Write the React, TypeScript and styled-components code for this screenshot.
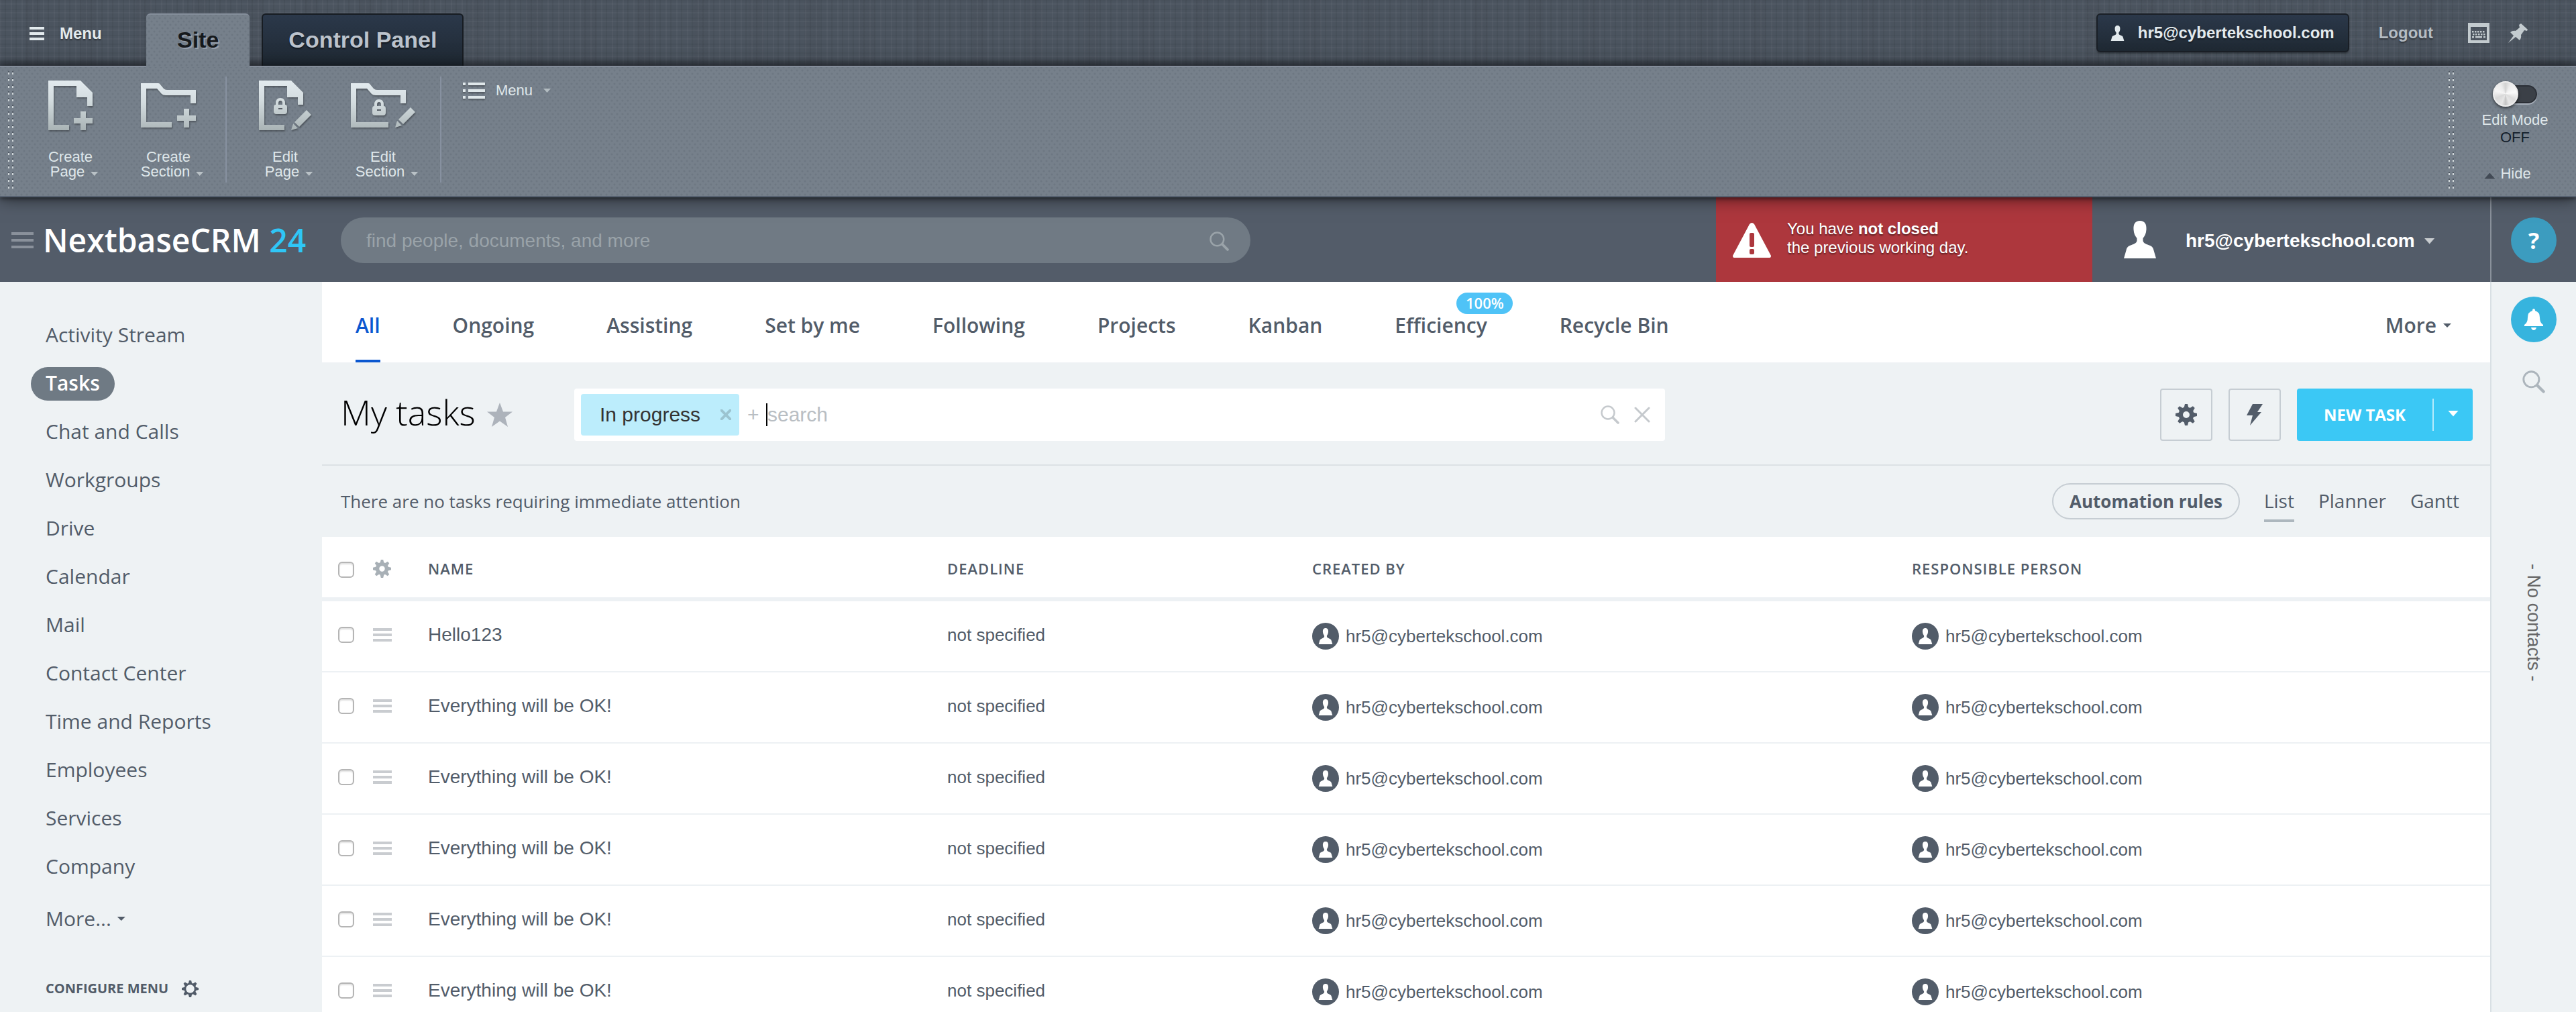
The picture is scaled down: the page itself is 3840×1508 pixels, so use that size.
import React from "react";
import styled, { createGlobalStyle, css } from "styled-components";

const sans = `"Liberation Sans", Arial, sans-serif`;
const open = `"Open Sans", "Noto Sans", sans-serif`;

const Global = createGlobalStyle`
  *, *::before, *::after { box-sizing: border-box; }
  body { margin: 0; font-family: ${sans}; color: #525c69; background: #eef2f4; }
  button, input { font: inherit; color: inherit; margin: 0; }
  button { padding: 0; border: 0; background: none; cursor: pointer; }
  a { color: inherit; text-decoration: none; }
  svg { display: block; flex: none; }
`;

const Page = styled.div`
  height: 100vh;
  overflow: hidden;
  display: flex;
  flex-direction: column;
`;

const Caret = styled.span<{ $w?: number; $h?: number; $up?: boolean }>`
  display: inline-block;
  flex: none;
  width: ${(p) => p.$w ?? 12}px;
  height: ${(p) => p.$h ?? 6}px;
  background: currentColor;
  clip-path: ${(p) =>
    p.$up ? "polygon(50% 0, 100% 100%, 0 100%)" : "polygon(0 0, 100% 0, 50% 100%)"};
`;

/* ---------- admin panel ---------- */

const TopBar = styled.div`
  flex: none;
  height: 98px;
  padding: 0 72px 0 44px;
  display: flex;
  align-items: flex-start;
  background:
    linear-gradient(to bottom, transparent 86px, rgba(30, 36, 44, 0.45)),
    repeating-linear-gradient(90deg, rgba(255, 255, 255, 0.03) 0 2px, transparent 2px 7px, rgba(0, 0, 0, 0.05) 7px 9px, transparent 9px 16px),
    repeating-linear-gradient(90deg, transparent 0 37px, rgba(0, 0, 0, 0.02) 37px 60px, transparent 60px 83px),
    repeating-linear-gradient(0deg, rgba(255, 255, 255, 0.03) 0 2px, transparent 2px 5px, rgba(0, 0, 0, 0.04) 5px 7px, transparent 7px 13px),
    #4b545f;
`;

const MenuButton = styled.button`
  display: flex;
  align-items: center;
  gap: 23px;
  width: 174px;
  height: 98px;
  padding-top: 2px;
  font-size: 24px;
  font-weight: 700;
  color: #e3eaed;
  text-shadow: 0 2px 2px rgba(0, 0, 0, 0.4);
`;

const Tabs = styled.div`
  display: flex;
  gap: 18px;
  padding-top: 20px;
  flex: 1;
`;

const dots = css`
  background-image: radial-gradient(circle, rgba(50, 62, 76, 0.13) 1px, transparent 2px),
    radial-gradient(circle, rgba(50, 62, 76, 0.13) 1px, transparent 2px);
  background-size: 8px 10px;
  background-position: 0 0, 4px 5px;
`;

const Tab = styled.button<{ $active?: boolean }>`
  height: 78px;
  font-size: 34px;
  font-weight: 700;
  border-radius: 6px 6px 0 0;
  ${(p) =>
    p.$active
      ? css`
          position: relative;
          z-index: 3;
          height: 80px;
          padding: 0 46px 4px;
          color: #16191c;
          text-shadow: 2px 2px 0 rgba(160, 168, 182, 0.8);
          background-color: #76808b;
          border-top: 2px solid #858e9b;
          ${dots}
        `
      : css`
          padding: 0 38px 2px;
          color: #bcc3cc;
          text-shadow: 0 2px 2px rgba(0, 0, 0, 0.5);
          background: linear-gradient(#2b384a, #1f2933);
          border: 2px solid #171c22;
          border-bottom: 0;
        `}
`;

const TopActions = styled.div`
  display: flex;
  align-items: center;
  padding-top: 20px;
  font-size: 24px;
  font-weight: 700;
  color: #b4bcc3;
  text-shadow: 0 2px 2px rgba(0, 0, 0, 0.4);
`;

const AccountLink = styled.a`
  display: flex;
  align-items: center;
  gap: 19px;
  height: 58px;
  margin-right: 44px;
  padding: 0 20px 0 18px;
  color: #e3eaed;
  border: 2px solid #1a1f26;
  border-radius: 6px;
  background: linear-gradient(#2b384a, #1f2933);
  box-shadow: 0 2px 2px rgba(0, 0, 0, 0.25);
`;

const IconButton = styled.button<{ $ml?: number; $tone?: string }>`
  display: flex;
  margin-left: ${(p) => p.$ml ?? 0}px;
  color: ${(p) => p.$tone ?? "inherit"};
`;

const Ribbon = styled.div`
  position: relative;
  z-index: 2;
  flex: none;
  display: flex;
  height: 196px;
  padding: 0 0 0 12px;
  background-color: #76808b;
  border-top: 2px solid #858e9b;
  border-bottom: 2px solid #566170;
  box-shadow: 0 2px 24px rgba(0, 0, 0, 0.55), 0 2px 6px rgba(0, 0, 0, 0.45);
  ${dots}
`;

const Grip = styled.div`
  width: 8px;
  height: 180px;
  margin-top: 6px;
  background:
    linear-gradient(90deg, transparent 2px, #76808b 2px 6px, transparent 6px),
    repeating-linear-gradient(#4f5863 0 2px, #cfd6d9 2px 5px, #76808b 5px 10px);
`;

const RibbonGroup = styled.div`
  display: flex;
  align-items: flex-start;
  height: 158px;
  margin-top: 14px;
  padding: 4px 12px 0;
  border-right: 2px solid #8791a0;
  & + & { padding-left: 14px; }
`;

const RibbonButton = styled.button`
  width: 146px;
  display: flex;
  flex-direction: column;
  align-items: center;
  font-size: 22px;
  line-height: 22px;
  color: #dfe7ea;
`;

const RibbonIcon = styled.span`
  height: 78px;
  margin-bottom: 27px;
  display: flex;
  align-items: center;
  filter: drop-shadow(1px 2px 1px rgba(0, 0, 0, 0.3));
`;

const ArrowLabel = styled.span`
  display: flex;
  align-items: center;
  gap: 9px;
  padding-left: 11px;
  & > span { color: #b9c1c6; margin-top: 6px; }
`;

const RibbonMenu = styled.button`
  align-self: flex-start;
  display: flex;
  align-items: center;
  gap: 16px;
  margin: 22px auto 0 32px;
  font-size: 22px;
  color: #dfe7ea;
  & > svg { filter: drop-shadow(0 2px 1px rgba(0, 0, 0, 0.3)); }
  & > span:last-child { color: #b3bcc1; }
`;

const ModePanel = styled.div`
  width: 182px;
  padding-top: 20px;
  display: flex;
  flex-direction: column;
  align-items: center;
  font-size: 22px;
  line-height: 26px;
  color: #dfe7ea;
`;

const ModeLabel = styled.label`
  display: flex;
  flex-direction: column;
  align-items: center;
  & > b { font-weight: 400; color: #14202c; }
`;

const Switch = styled.input`
  && { margin-bottom: 6px; }
  appearance: none;
  position: relative;
  width: 66px;
  height: 40px;
  &::before {
    content: "";
    position: absolute;
    inset: 7px 0 6px 12px;
    border-radius: 14px;
    background: #3b4047;
    border: 2px solid #2b2f36;
    box-shadow: 0 2px 0 #a8b0bb;
  }
  &::after {
    content: "";
    position: absolute;
    left: 0;
    top: 1px;
    width: 38px;
    height: 38px;
    border-radius: 50%;
    background: conic-gradient(#d2d2d2, #ededed 8%, #fafafa 22%, #dcdcdc 34%, #e6e6e6 44%, #c4c4c4 50%, #e6e6e6 56%, #d8d8d8 68%, #f6f6f6 80%, #ececec 92%, #d2d2d2);
    border: 2px solid #ededed;
    box-shadow: 0 2px 4px rgba(0, 0, 0, 0.6);
  }
`;

const HideButton = styled.button`
  display: flex;
  align-items: center;
  gap: 8px;
  margin: 28px 22px 0 0;
  line-height: 26px;
  & > span { color: #424a55; margin-top: 6px; }
`;

/* ---------- portal header ---------- */

const Header = styled.header`
  flex: none;
  height: 126px;
  display: flex;
  background: #535c69;
`;

const Brand = styled.div`
  width: 508px;
  flex: none;
  display: flex;
  align-items: center;
  gap: 14px;
  padding: 2px 0 0 17px;
`;

const Logo = styled.a`
  font: 600 48px/64px ${open};
  color: #fff;
  white-space: nowrap;
  & > span { color: #2fc6f6; }
`;

const HeaderSearch = styled.label`
  flex: 1;
  max-width: 1356px;
  height: 68px;
  margin: 30px auto 0 0;
  padding: 2px 32px 0 38px;
  display: flex;
  align-items: center;
  border-radius: 34px;
  background: #707a84;
  color: #9aa3a9;
`;

const BareInput = styled.input<{ $size: number; $tone: string }>`
  flex: 1;
  min-width: 0;
  border: 0;
  outline: 0;
  padding: 0;
  background: none;
  font-size: ${(p) => p.$size}px;
  &::placeholder { color: ${(p) => p.$tone}; opacity: 1; }
`;

const Alert = styled.div`
  flex: none;
  width: 561px;
  display: flex;
  align-items: flex-start;
  gap: 24px;
  padding: 33px 0 0 25px;
  background: #ad373d;
  color: #fff;
  font-size: 24px;
  line-height: 28px;
  text-shadow: 0 2px 2px rgba(0, 0, 0, 0.45);
  & p { margin: 0; }
  & svg { margin-top: 5px; }
`;

const UserMenu = styled.button`
  flex: none;
  width: 593px;
  display: flex;
  align-items: center;
  gap: 44px;
  padding-left: 47px;
  font-size: 28px;
  font-weight: 700;
  color: #fff;
`;

const UserName = styled.span`
  display: flex;
  align-items: center;
  gap: 14px;
  padding-top: 4px;
  & > span { color: #c8cccf; }
`;

const HelpCell = styled.div`
  flex: none;
  width: 128px;
  border-left: 2px solid #8a919b;
  padding-top: 2px;
  display: flex;
  align-items: center;
  justify-content: center;
`;

const RoundButton = styled.button<{ $bg: string }>`
  width: 68px;
  height: 68px;
  border-radius: 50%;
  display: flex;
  align-items: center;
  justify-content: center;
  background: ${(p) => p.$bg};
  color: #fff;
  font: 700 34px/48px ${open};
`;

/* ---------- body ---------- */

const Body = styled.div`
  flex: 1;
  min-height: 0;
  display: flex;
`;

const Sidebar = styled.nav`
  flex: none;
  width: 480px;
  padding: 44px 0 0 46px;
  font-family: ${open};
  & ul { margin: 0; padding: 0; list-style: none; }
`;

const SideItem = styled.li<{ $tall?: boolean }>`
  height: ${(p) => (p.$tall ? 84 : 72)}px;
  display: flex;
  align-items: center;
`;

const SideLink = styled.a<{ $active?: boolean }>`
  display: flex;
  align-items: center;
  gap: 9px;
  height: 50px;
  padding: 0 22px 2px;
  border-radius: 25px;
  font-size: 30px;
  line-height: 42px;
  ${(p) => p.$active && "background: #6f7a84; color: #fff; font-weight: 600;"}
`;

const Configure = styled.button`
  display: flex;
  align-items: center;
  gap: 20px;
  margin: 47px 0 0 22px;
  font: 700 20px/28px ${open};
  color: #525c69;
`;

const Main = styled.main`
  flex: 1;
  min-width: 0;
`;

const Filters = styled.nav`
  display: flex;
  gap: 108px;
  height: 120px;
  padding: 0 58px 0 50px;
  background: #fff;
  font: 600 30px/42px ${open};
`;

const FilterLink = styled.a<{ $active?: boolean; $end?: boolean }>`
  position: relative;
  display: flex;
  align-items: center;
  gap: 10px;
  padding-top: 14px;
  border-bottom: 4px solid transparent;
  ${(p) => p.$active && "color: #0b57d0; border-color: #0b57d0;"}
  ${(p) => p.$end && "margin-left: auto;"}
`;

const Badge = styled.span`
  position: absolute;
  top: 16px;
  left: 92px;
  width: 84px;
  height: 32px;
  border-radius: 16px;
  background: #4fc3f7;
  color: #fff;
  font-size: 22px;
  line-height: 31px;
  text-align: center;
`;

const TitleBar = styled.div`
  display: flex;
  align-items: center;
  height: 154px;
  padding: 4px 26px 0 28px;
  border-bottom: 2px solid #dce1e5;
`;

const Title = styled.h1`
  margin: 0;
  width: 218px;
  flex: none;
  font: 300 52px/72px ${open};
  color: #000;
  padding-bottom: 8px;
  white-space: nowrap;
`;

const SearchBox = styled.div`
  flex: 1;
  max-width: 1626px;
  height: 78px;
  margin: 0 auto 0 92px;
  padding: 8px 22px 8px 10px;
  display: flex;
  align-items: center;
  background: #fff;
  border-radius: 4px;
  font-size: 30px;
  color: #b9bec3;
`;

const Chip = styled.span`
  height: 62px;
  width: 236px;
  padding: 0 12px 0 28px;
  display: flex;
  align-items: center;
  justify-content: space-between;
  border-radius: 4px;
  background: #bcedfc;
  color: #333;
`;

const Plus = styled.span`
  margin-left: 12px;
  width: 28px;
`;

const TextCursor = styled.span`
  width: 2px;
  height: 34px;
  background: #000;
`;

const BoxIcons = styled.div`
  display: flex;
  align-items: center;
  gap: 22px;
  color: #c5c9cd;
`;

const SquareButton = styled.button`
  width: 78px;
  height: 78px;
  margin-right: 24px;
  display: flex;
  align-items: center;
  justify-content: center;
  border: 2px solid #c6cdd3;
  border-radius: 4px;
  color: #525c69;
`;

const SplitButton = styled.div`
  display: flex;
  align-items: center;
  width: 262px;
  height: 78px;
  border-radius: 4px;
  background: #3bc8f5;
  color: #fff;
`;

const SplitMain = styled.button`
  flex: 1;
  height: 78px;
  font: 700 24px/34px ${open};
`;

const SplitArrow = styled.button`
  width: 60px;
  height: 48px;
  padding-bottom: 4px;
  border-left: 2px solid #b8ebfb;
  display: flex;
  align-items: center;
  justify-content: center;
`;

const ViewBar = styled.div`
  display: flex;
  align-items: center;
  height: 106px;
  padding: 0 46px 0 28px;
  font: 400 26px/36px ${open};
  & > p { margin: 0 auto 0 0; }
`;

const PillButton = styled.button`
  height: 54px;
  padding: 0 24px;
  border: 2px solid #c6cdd3;
  border-radius: 27px;
  font-weight: 700;
`;

const ViewLink = styled.a<{ $active?: boolean }>`
  margin: 4px 0 0 36px;
  padding: 8px 0 10px;
  font-size: 28px;
  line-height: 36px;
  border-bottom: 4px solid ${(p) => (p.$active ? "#adb7be" : "transparent")};
`;

const Table = styled.table`
  width: 100%;
  table-layout: fixed;
  border-collapse: separate;
  border-spacing: 0;
  background: #fff;
`;

const Th = styled.th<{ $first?: boolean }>`
  height: 96px;
  padding: ${(p) => (p.$first ? 8 : 4)}px 0 0 ${(p) => (p.$first ? 24 : 0)}px;
  text-align: left;
  font: 600 22px/30px ${open};
  letter-spacing: 1px;
  border-bottom: 6px solid #edf1f4;
`;

const Td = styled.td<{ $first?: boolean; $size?: number; $low?: boolean }>`
  height: 106px;
  padding: 0 0 ${(p) => (p.$low ? 0 : 4)}px ${(p) => (p.$first ? 24 : 0)}px;
  font-size: ${(p) => p.$size ?? 26}px;
  border-bottom: 2px solid #edf1f4;
`;

const Check = styled.input`
  appearance: none;
  display: block;
  width: 24px;
  height: 24px;
  border: 2px solid #b5b5b5;
  border-radius: 6px;
  background: #fff;
  box-shadow: inset 0 2px 2px rgba(0, 0, 0, 0.12);
`;

const Person = styled.a`
  display: flex;
  align-items: center;
  gap: 10px;
`;

const Avatar = styled.span`
  width: 40px;
  height: 40px;
  border-radius: 50%;
  background: #525c69;
  color: #fff;
  display: flex;
  align-items: center;
  justify-content: center;
`;

const Rail = styled.aside`
  flex: none;
  width: 128px;
  border-left: 2px solid #d9e0e4;
  display: flex;
  flex-direction: column;
  align-items: center;
  padding-top: 22px;
`;

const RailSearch = styled.button`
  margin-top: 42px;
  color: #acb5bc;
`;

const NoContacts = styled.p`
  margin: 254px 0 0;
  writing-mode: vertical-rl;
  font-size: 27px;
  line-height: 30px;
  color: #666;
  white-space: nowrap;
`;

/* ---------- icons ---------- */

const Bars = ({ w, h, bar }: { w: number; h: number; bar: number }) => (
  <svg width={w} height={h} fill="currentColor">
    {[0, (h - bar) / 2, h - bar].map((y) => (
      <rect key={y} y={y} width={w} height={bar} />
    ))}
  </svg>
);

const PersonIcon = ({ w, h }: { w: number; h: number }) => (
  <svg width={w} height={h} viewBox="0 0 48 56" fill="currentColor">
    <path d="M24 0c7 0 10 5 9.500 13-.3 6-2.500 10-5 13v4c1 3 3 4 8 6 6 2 7 4 8 8l3.500 12H0l3.500-12c1-4 2-6 8-8 5-2 7-3 8-6v-4c-2.500-3-4.700-7-5-13C14 5 17 0 24 0z" />
  </svg>
);

const SearchIcon = ({ size, stroke = 3 }: { size: number; stroke?: number }) => (
  <svg width={size} height={size} viewBox="0 0 28 28" fill="none" stroke="currentColor">
    <circle cx="11" cy="11" r="9.500" strokeWidth={stroke * 0.8} />
    <path d="M18.500 18.500 26 26" strokeWidth={stroke * 1.2} strokeLinecap="round" />
  </svg>
);

const GearIcon = ({ size, hole = 5 }: { size: number; hole?: number }) => (
  <svg width={size} height={size} viewBox="-16 -16 32 32" fill="none" stroke="currentColor">
    <circle r={(11.5 + hole) / 2} strokeWidth={11.5 - hole} />
    {[0, 45, 90, 135, 180, 225, 270, 315].map((a) => (
      <path key={a} d="M-3.500-10-2-16h4l1.500 6z" fill="currentColor" stroke="none" transform={`rotate(${a})`} />
    ))}
  </svg>
);

const CrossIcon = ({ size, stroke, tone = "currentColor" }: { size: number; stroke: number; tone?: string }) => (
  <svg width={size} height={size} viewBox="0 0 24 24" stroke={tone} strokeWidth={stroke} strokeLinecap="round">
    <path d="M2 2l20 20M22 2 2 22" />
  </svg>
);

const Metal = ({ id }: { id: string }) => (
  <linearGradient id={id} x1="0" y1="0" x2="0" y2="74" gradientUnits="userSpaceOnUse">
    <stop offset="0" stopColor="#e2eaee" />
    <stop offset=".4" stopColor="#d3dcdf" />
    <stop offset="1" stopColor="#a9b3b5" />
  </linearGradient>
);

const lock =
  "m0 14q0-4 3-4v-2q0-8 7-8t7 8v2q3 0 3 4v6q0 4-4 4h-12q-4 0-4-4zm7-4h6v-2q0-4-3-4t-3 4zm0 5v2h6v-2z";

const CreatePageIcon = () => (
  <svg width="66" height="74" fill="url(#m1)">
    <Metal id="m1" />
    <path d="M0 0h48l18 18v20h-8V25H42V8H8v58h23v8H0z" />
    <path d="M48 46h8v10h10v8H56v10h-8V64H38v-8h10z" />
  </svg>
);

const CreateSectionIcon = () => (
  <svg width="82" height="66" fill="url(#m2)">
    <Metal id="m2" />
    <path d="M0 0h26q2 0 3 2l5 6q2 2 5 2h43v20h-8V18H37q-4 0-6-2l-7-8H8v50h38v8H0z" />
    <path d="M64 38h8v10h10v8H72v10h-8V56H54v-8h10z" />
  </svg>
);

const EditPageIcon = () => (
  <svg width="78" height="74" fill="url(#m3)">
    <Metal id="m3" />
    <path d="M0 0h48l18 18v18h-8V25H42V8H8v58h30v8H0z" />
    <path fillRule="evenodd" d={`M22 26${lock}`} />
    <path d="M71 44l7 7-18 18-7-7zM51 64l7 7-10 3z" />
  </svg>
);

const EditSectionIcon = () => (
  <svg width="96" height="66" fill="url(#m4)">
    <Metal id="m4" />
    <path d="M0 0h26q2 0 3 2l5 6q2 2 5 2h43v20h-8V18H37q-4 0-6-2l-7-8H8v50h48v8H0z" />
    <path fillRule="evenodd" d={`M32 24${lock}`} />
    <path d="M89 36l7 7-18 18-7-7zM69 56l7 7-10 3z" />
  </svg>
);

const ListIcon = () => (
  <svg width="33" height="25" fill="#dfe7ea">
    {[0, 10, 20].map((y) => (
      <g key={y}>
        <rect y={y} width="4" height="4" />
        <rect x="8" y={y} width="25" height="4" />
      </g>
    ))}
  </svg>
);

const KeyboardIcon = () => (
  <svg width="32" height="30" fill="#c3cbcf">
    <path fillRule="evenodd" d="M0 0h32v30H0zM4 6v20h24V6z" />
    {[6, 10, 14, 18, 22].map((x) => (
      <React.Fragment key={x}>
        <rect x={x} y="12" width="2.500" height="2.500" />
        <rect x={x + 1} y="16" width="2.500" height="2.500" />
      </React.Fragment>
    ))}
    <path d="M6 20h3v2.500H6zM11 20h10v2.500H11zM23 20h3v2.500h-3z" />
  </svg>
);

const PinIcon = () => (
  <svg width="29" height="29" fill="#c3cbcf">
    <path d="M19 0l10 9-1 2-4-1-5 7q1 4-2 8l-6-5L0 29l8-11-5-5q4-3 8-2l6-5-1-4z" />
  </svg>
);

const WarningIcon = () => (
  <svg width="57" height="52">
    <path d="M25 2q3.500-4 7 0l25 47q0 3-2 3H2q-2 0-2-3z" fill="#fff" />
    <rect x="25" y="15" width="7" height="21" rx="2" fill="#ad373d" />
    <rect x="25" y="39" width="7" height="8" rx="2" fill="#ad373d" />
  </svg>
);

const StarIcon = () => (
  <svg width="38" height="36" viewBox="0 0 38 36" fill="#adb3bb">
    <path d="M19 0l5 13.500h14L27 22l4 14-12-8.500L7 36l4-14L0 13.500h14z" />
  </svg>
);

const BoltIcon = () => (
  <svg width="24" height="32" fill="currentColor">
    <path d="M9 0h15l-8 12h6L5 32l4-15H0z" />
  </svg>
);

const BellIcon = () => (
  <svg width="28" height="32" fill="#fff">
    <path d="M14 0q2 0 2 3 7 2 7 10 0 8 5 11v2H0v-2q5-3 5-11 0-8 7-10 0-3 2-3zM10 28h8q-1 4-4 4t-4-4z" />
  </svg>
);

/* ---------- data ---------- */

const email = "hr5@cybertekschool.com";
const sideItems = [
  "Activity Stream", "Tasks", "Chat and Calls", "Workgroups", "Drive", "Calendar",
  "Mail", "Contact Center", "Time and Reports", "Employees", "Services", "Company",
];
const filters = [
  "All", "Ongoing", "Assisting", "Set by me", "Following", "Projects", "Kanban", "Efficiency", "Recycle Bin",
];
const tasks = ["Hello123", ...Array(5).fill("Everything will be OK!")];
const ribbonGroups = [
  [["Create", "Page", CreatePageIcon], ["Create", "Section", CreateSectionIcon]],
  [["Edit", "Page", EditPageIcon], ["Edit", "Section", EditSectionIcon]],
] as [string, string, React.FC][][];

const PersonLink = () => (
  <Person href="#">
    <Avatar><PersonIcon w={22} h={24} /></Avatar>
    {email}
  </Person>
);

export default function App() {
  return (
    <Page>
      <Global />
      <TopBar>
        <MenuButton><Bars w={22} h={20} bar={4} />Menu</MenuButton>
        <Tabs>
          <Tab $active>Site</Tab>
          <Tab>Control Panel</Tab>
        </Tabs>
        <TopActions>
          <AccountLink href="#"><PersonIcon w={23} h={23} />{email}</AccountLink>
          <a href="#">Logout</a>
          <IconButton $ml={52} aria-label="Keyboard shortcuts"><KeyboardIcon /></IconButton>
          <IconButton $ml={28} aria-label="Pin panel"><PinIcon /></IconButton>
        </TopActions>
      </TopBar>

      <Ribbon>
        <Grip />
        {ribbonGroups.map((group, i) => (
          <RibbonGroup key={i}>
            {group.map(([verb, noun, Icon]) => (
              <RibbonButton key={noun}>
                <RibbonIcon><Icon /></RibbonIcon>
                <span>{verb}</span>
                <ArrowLabel>{noun}<Caret $w={11} /></ArrowLabel>
              </RibbonButton>
            ))}
          </RibbonGroup>
        ))}
        <RibbonMenu><ListIcon />Menu<Caret $w={11} /></RibbonMenu>
        <Grip />
        <ModePanel>
          <ModeLabel>
            <Switch type="checkbox" role="switch" />
            Edit Mode
            <b>OFF</b>
          </ModeLabel>
          <HideButton><Caret $w={16} $h={9} $up />Hide</HideButton>
        </ModePanel>
      </Ribbon>

      <Header>
        <Brand>
          <IconButton $tone="#8a919b" aria-label="Toggle menu"><Bars w={33} h={24} bar={4} /></IconButton>
          <Logo href="#">NextbaseCRM <span>24</span></Logo>
        </Brand>
        <HeaderSearch>
          <BareInput $size={28} $tone="#9aa3a9" placeholder="find people, documents, and more" aria-label="Search" />
          <SearchIcon size={29} />
        </HeaderSearch>
        <Alert>
          <WarningIcon />
          <p>You have <b>not closed</b><br />the previous working day.</p>
        </Alert>
        <UserMenu>
          <PersonIcon w={48} h={56} />
          <UserName>{email}<Caret $w={16} $h={9} /></UserName>
        </UserMenu>
        <HelpCell><RoundButton $bg="#3c9cbf">?</RoundButton></HelpCell>
      </Header>

      <Body>
        <Sidebar>
          <ul>
            {sideItems.map((item) => (
              <SideItem key={item}><SideLink href="#" $active={item === "Tasks"}>{item}</SideLink></SideItem>
            ))}
            <SideItem $tall><SideLink as="button">More...<Caret /></SideLink></SideItem>
          </ul>
          <Configure>CONFIGURE MENU<GearIcon size={25} hole={8} /></Configure>
        </Sidebar>

        <Main>
          <Filters>
            {filters.map((f) => (
              <FilterLink key={f} href="#" $active={f === "All"}>
                {f}
                {f === "Efficiency" && <Badge>100%</Badge>}
              </FilterLink>
            ))}
            <FilterLink as="button" $end>More<Caret /></FilterLink>
          </Filters>

          <TitleBar>
            <Title>My tasks</Title>
            <StarIcon />
            <SearchBox>
              <Chip>In progress<CrossIcon size={16} stroke={6} tone="#9cc4d0" /></Chip>
              <Plus>+</Plus>
              <TextCursor />
              <BareInput $size={30} $tone="#b9bec3" placeholder="search" aria-label="Filter and search" />
              <BoxIcons><SearchIcon size={28} /><CrossIcon size={24} stroke={3} /></BoxIcons>
            </SearchBox>
            <SquareButton aria-label="Settings"><GearIcon size={32} /></SquareButton>
            <SquareButton aria-label="Automation"><BoltIcon /></SquareButton>
            <SplitButton>
              <SplitMain>NEW TASK</SplitMain>
              <SplitArrow aria-label="More task types"><Caret $w={16} $h={9} /></SplitArrow>
            </SplitButton>
          </TitleBar>

          <ViewBar>
            <p>There are no tasks requiring immediate attention</p>
            <PillButton>Automation rules</PillButton>
            <ViewLink href="#" $active>List</ViewLink>
            <ViewLink href="#">Planner</ViewLink>
            <ViewLink href="#">Gantt</ViewLink>
          </ViewBar>

          <Table>
            <colgroup>
              <col style={{ width: 76 }} />
              <col style={{ width: 82 }} />
              <col style={{ width: "23.95%" }} />
              <col style={{ width: "16.83%" }} />
              <col style={{ width: "27.66%" }} />
              <col />
            </colgroup>
            <thead>
              <tr>
                <Th $first><Check type="checkbox" aria-label="Select all" /></Th>
                <Th><IconButton $tone="#a8b0b6" aria-label="Columns"><GearIcon size={27} /></IconButton></Th>
                <Th>NAME</Th>
                <Th>DEADLINE</Th>
                <Th>CREATED BY</Th>
                <Th>RESPONSIBLE PERSON</Th>
              </tr>
            </thead>
            <tbody>
              {tasks.map((t, i) => (
                <tr key={i}>
                  <Td $first><Check type="checkbox" aria-label={`Select ${t}`} /></Td>
                  <Td><IconButton $tone="#c9ccd0" aria-label="Actions"><Bars w={28} h={20} bar={4} /></IconButton></Td>
                  <Td $size={28}><a href="#">{t}</a></Td>
                  <Td>not specified</Td>
                  <Td $low><PersonLink /></Td>
                  <Td $low><PersonLink /></Td>
                </tr>
              ))}
            </tbody>
          </Table>
        </Main>

        <Rail>
          <RoundButton $bg="#36b4de" aria-label="Notifications"><BellIcon /></RoundButton>
          <RailSearch aria-label="Search contacts"><SearchIcon size={34} /></RailSearch>
          <NoContacts>- No contacts -</NoContacts>
        </Rail>
      </Body>
    </Page>
  );
}
